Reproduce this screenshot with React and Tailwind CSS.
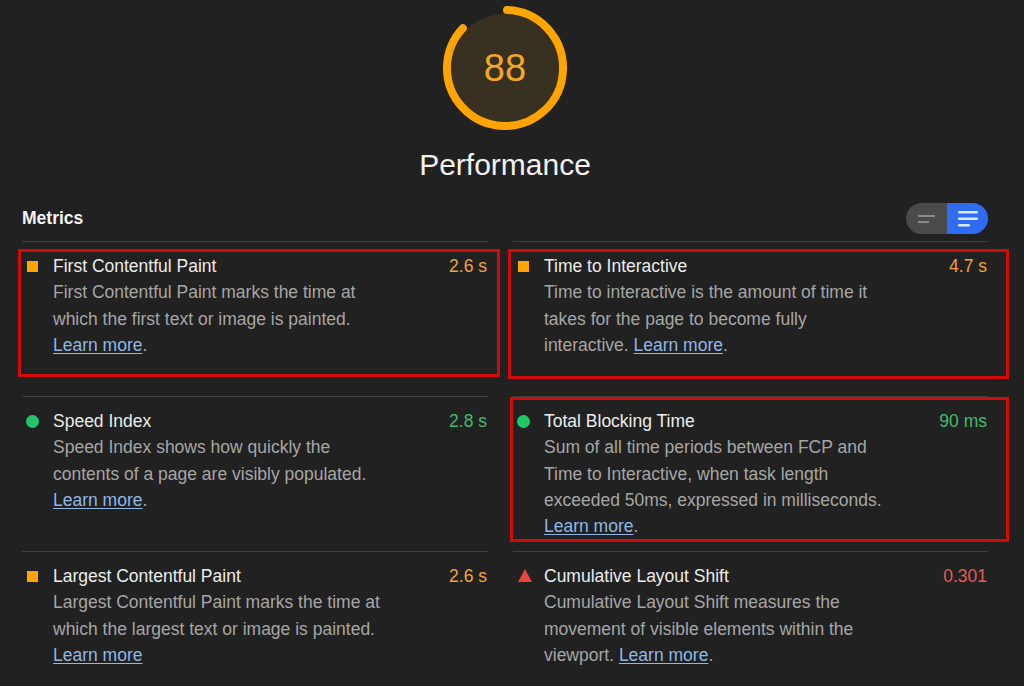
import React from 'react'

const metrics = [
  [
    {
      kind: 'square',
      title: 'First Contentful Paint',
      value: '2.6 s',
      tone: 'text-[#f2a33a]',
      lines: ['First Contentful Paint marks the time at', 'which the first text or image is painted.'],
      link: 'newline',
      dot: true,
      box: 'left-[-4px] right-[-12px] top-[7px] bottom-[19px]',
    },
    {
      kind: 'square',
      title: 'Time to Interactive',
      value: '4.7 s',
      tone: 'text-[#f2a33a]',
      lines: ['Time to interactive is the amount of time it', 'takes for the page to become fully'],
      last: 'interactive. ',
      dot: true,
      box: 'left-[-5px] right-[-21px] top-[7px] bottom-[17px]',
    },
  ],
  [
    {
      kind: 'circle',
      title: 'Speed Index',
      value: '2.8 s',
      tone: 'text-[#3dbd6e]',
      lines: ['Speed Index shows how quickly the', 'contents of a page are visibly populated.'],
      link: 'newline',
      dot: true,
    },
    {
      kind: 'circle',
      title: 'Total Blocking Time',
      value: '90 ms',
      tone: 'text-[#3dbd6e]',
      lines: [
        'Sum of all time periods between FCP and',
        'Time to Interactive, when task length',
        'exceeded 50ms, expressed in milliseconds.',
      ],
      link: 'newline',
      dot: true,
      box: 'left-[-3px] right-[-21px] top-[0px] bottom-[9px]',
    },
  ],
  [
    {
      kind: 'square',
      title: 'Largest Contentful Paint',
      value: '2.6 s',
      tone: 'text-[#f2a33a]',
      lines: ['Largest Contentful Paint marks the time at', 'which the largest text or image is painted.'],
      link: 'newline',
      dot: false,
    },
    {
      kind: 'triangle',
      title: 'Cumulative Layout Shift',
      value: '0.301',
      tone: 'text-[#e85a58]',
      lines: ['Cumulative Layout Shift measures the', 'movement of visible elements within the'],
      last: 'viewport. ',
      dot: true,
    },
  ],
]

function Indicator({ kind }) {
  if (kind === 'circle') return <span className="mt-[7px] ml-[4px] block h-[13px] w-[13px] rounded-full bg-[#1fc76a]" />
  if (kind === 'triangle')
    return (
      <svg className="mt-[6px] ml-[5px]" width="14" height="13" viewBox="0 0 14 13" aria-hidden="true">
        <polygon points="7,0 14,13 0,13" fill="#e8453e" />
      </svg>
    )
  return <span className="mt-[8px] ml-[5px] block h-[11px] w-[11px] bg-[#ffa400]" />
}

function LearnMore() {
  return <a className="text-[#8fb8e6] underline underline-offset-2 decoration-1">Learn more</a>
}

function Metric({ m }) {
  return (
    <div className="relative h-[155px] border-t border-[#3e3e3e] pt-[11px]">
      <div className="flex">
        <div className="w-[31px] shrink-0">
          <Indicator kind={m.kind} />
        </div>
        <div className="flex-1">
          <div className="flex justify-between pr-[1px]">
            <span className="text-[#ececec]">{m.title}</span>
            <span className={m.tone}>{m.value}</span>
          </div>
          <div className="text-[#a6a6a6]">
            {m.lines.map((l) => (
              <div key={l}>{l}</div>
            ))}
            {m.last ? (
              <div>
                {m.last}
                <LearnMore />.
              </div>
            ) : (
              <div>
                <LearnMore />
                {m.dot ? '.' : ''}
              </div>
            )}
          </div>
        </div>
      </div>
      {m.box && <div className={`pointer-events-none absolute border-[3px] border-[#d10a0a] ${m.box}`} />}
    </div>
  )
}

export default function App() {
  const r = 58
  const c = 2 * Math.PI * r
  return (
    <div className="min-h-[686px] w-[1024px] overflow-hidden bg-[#212121] font-['Liberation_Sans',Arial,sans-serif] text-[17.5px] leading-[26.3px]">
      {/* Score gauge */}
      <div className="flex flex-col items-center pt-[6px] pr-[14px]">
        <div className="relative h-[124px] w-[124px]">
          <svg width="124" height="124" viewBox="0 0 124 124" className="-rotate-90">
            <circle cx="62" cy="62" r="54" fill="#383020" />
            <circle
              cx="62"
              cy="62"
              r={r}
              fill="none"
              stroke="#ffa400"
              strokeWidth="8"
              strokeLinecap="round"
              strokeDasharray={`${c * 0.88 - 6} ${c}`}
              transform="rotate(2 62 62)"
            />
          </svg>
          <div className="absolute inset-0 flex items-center justify-center text-[38px] leading-none text-[#f5a623]">
            88
          </div>
        </div>
        <div className="mt-[17px] text-[30px] leading-[36px] text-[#f2f2f2]">Performance</div>
      </div>

      {/* Metrics header */}
      <div className="mt-[20px] flex items-center justify-between pl-[22px] pr-[36px]">
        <span className="font-bold text-[#f4f4f4]">Metrics</span>
        <div className="flex h-[31px] w-[82px] overflow-hidden rounded-full">
          <div className="flex w-[41px] items-center justify-center bg-[#4a4a4a]">
            <svg width="18" height="10" viewBox="0 0 18 10" aria-hidden="true">
              <rect x="0" y="1" width="17" height="2" fill="#8a8a8a" />
              <rect x="0" y="7" width="11" height="2" fill="#8a8a8a" />
            </svg>
          </div>
          <div className="flex w-[41px] items-center justify-center bg-[#2f6cf2]">
            <svg width="20" height="16" viewBox="0 0 20 16" aria-hidden="true">
              <rect x="0" y="0" width="20" height="2.5" rx="1" fill="#dde8ff" />
              <rect x="0" y="6.5" width="20" height="2.5" rx="1" fill="#dde8ff" />
              <rect x="0" y="13" width="12" height="2.5" rx="1" fill="#dde8ff" />
            </svg>
          </div>
        </div>
      </div>

      <div className="mt-[7px] grid grid-cols-[466px_475px] gap-x-[25px] pl-[22px]">
        {metrics.flat().map((m) => (
          <Metric key={m.title} m={m} />
        ))}
      </div>
    </div>
  )
}
